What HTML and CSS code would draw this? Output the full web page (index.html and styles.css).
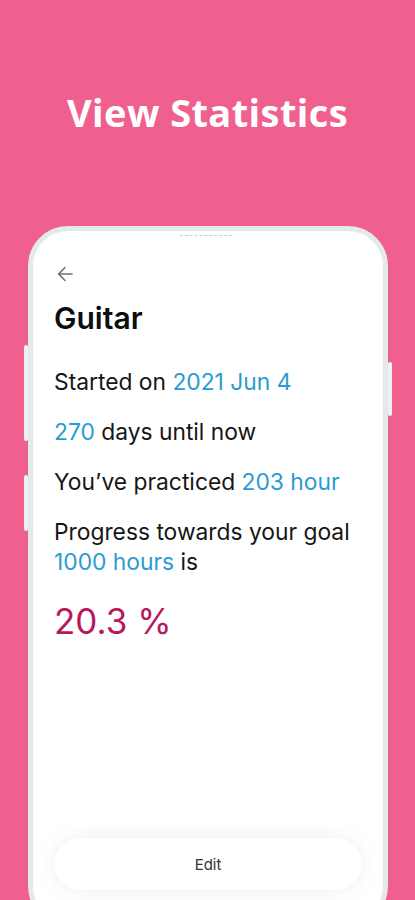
FILE: index.html
```html
<!DOCTYPE html>
<html>
<head>
<meta charset="utf-8">
<link rel="stylesheet" href="styles.css">
</head>
<body>
<div class="page">
  <h1 class="title">View Statistics</h1>
  <div class="phone">
    <span class="btn btn-l1"></span>
    <span class="btn btn-l2"></span>
    <span class="btn btn-r1"></span>
    <div class="screen">
      <span class="speaker"></span>
      <svg class="back" width="16" height="16" viewBox="0 0 16 16"><path d="M15 8H1.5M8 1.5L1.5 8L8 14.5" fill="none" stroke="#707070" stroke-width="1.6" stroke-linecap="round" stroke-linejoin="round"/></svg>
      <div class="name">Guitar</div>
      <p class="stat">Started on <span class="hl">2021 Jun 4</span></p>
      <p class="stat"><span class="hl">270</span> days until now</p>
      <p class="stat">You’ve practiced <span class="hl">203 hour</span></p>
      <p class="stat">Progress towards your goal <span class="hl">1000 hours</span> is</p>
      <div class="pct">20.3 %</div>
      <div class="edit">Edit</div>
    </div>
  </div>
</div>
</body>
</html>
```
FILE: styles.css
```css
html, body {
  margin: 0;
  padding: 0;
  background: #f0608e;
  overflow: hidden;
}
.page {
  height: 900px;
  padding-top: 89px;
  box-sizing: border-box;
}
.title {
  margin: 0;
  text-align: center;
  color: #ffffff;
  font-family: "Open Sans", sans-serif;
  font-weight: 700;
  font-size: 38px;
  line-height: 46px;
  letter-spacing: 0.4px;
}
.phone {
  position: relative;
  margin: 91px 0 0 28px;
  width: 360px;
  height: 700px;
  box-sizing: border-box;
  border: 5px solid #e4e9ec;
  border-radius: 40px;
  background: #ffffff;
}
.btn {
  position: absolute;
  width: 4px;
  background: #eef1f3;
  border-radius: 2px;
}
.btn-l1 { left: -9px; top: 114px; height: 96px; }
.btn-l2 { left: -9px; top: 244px; height: 56px; }
.btn-r1 { right: -9px; top: 131px; height: 54px; }
.screen {
  position: relative;
  height: 100%;
  box-sizing: border-box;
  border-radius: 35px;
  padding: 35px 21px 31px 21px;
  display: flex;
  flex-direction: column;
  align-items: flex-start;
  font-family: "Inter", sans-serif;
  color: #161616;
}
.speaker {
  position: absolute;
  top: 4px;
  left: 147px;
  width: 52px;
  height: 0;
  border-top: 1px dashed #c9cdd0;
}
.back {
  display: block;
  margin-left: 3px;
  width: 16px;
  height: 16px;
}
.name {
  margin-top: 19px;
  font-size: 30px;
  line-height: 34px;
  font-weight: 600;
  color: #0d0d0d;
}
.stat {
  margin: 0;
  font-size: 22.8px;
  line-height: 30px;
}
.name + .stat { margin-top: 32px; }
.stat + .stat { margin-top: 20px; }
.hl { color: #2a9cd4; }
.pct {
  margin-top: 22px;
  font-size: 35px;
  line-height: 44px;
  color: #b8195c;
}
.edit {
  margin-top: auto;
  align-self: stretch;
  height: 52px;
  border-radius: 26px;
  background: #ffffff;
  box-shadow: 0 0 22px rgba(0, 0, 0, 0.07);
  display: flex;
  align-items: center;
  justify-content: center;
  font-size: 15px;
  color: #333333;
}
```
